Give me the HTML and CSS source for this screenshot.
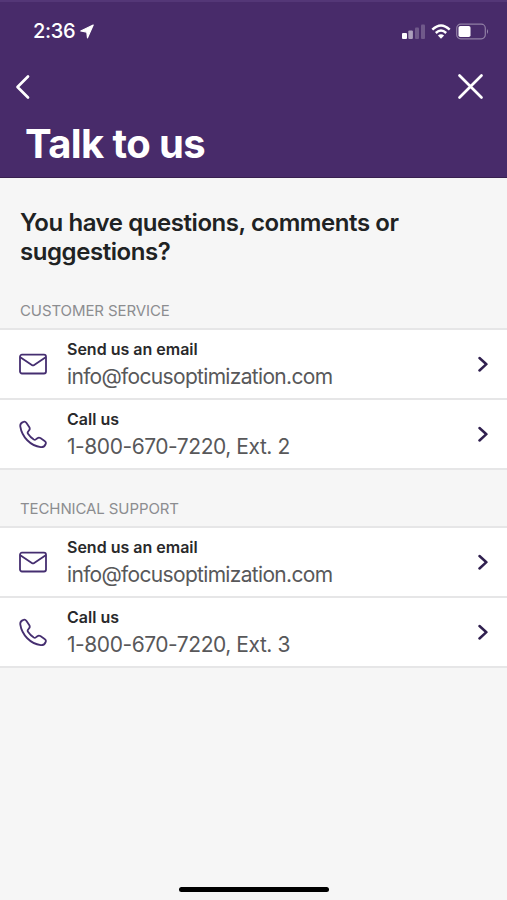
FILE: index.html
```html
<!DOCTYPE html>
<html lang="en">
<head>
<meta charset="utf-8">
<title>Talk to us</title>
<link rel="stylesheet" href="styles.css">
</head>
<body>
<svg class="defs" width="0" height="0" aria-hidden="true">
  <symbol id="mail" viewBox="0 0 28 28"><rect x="1" y="4.7" width="26" height="18.8" rx="2"/><path d="M1.3 7.2 13.2 15.2Q14 15.700 14.8 15.2L26.7 7.2"/></symbol>
  <symbol id="phone" viewBox="0 0 28 28"><path d="M1.300 6.500C1 4.400 2.500 2.400 4.500 1.800C5.700 1.400 6.800 1.900 7.500 2.900L10.200 7C11 8.200 10.900 9.300 10.100 10.300L9 11.700C8.500 12.400 8.500 13.100 9 13.800C10.600 16.200 12.400 18 14.800 19.500C15.500 19.900 16.200 19.900 16.800 19.400L18.400 18.200C19.300 17.500 20.400 17.400 21.400 18.100L25.600 20.900C26.700 21.600 27.100 22.800 26.700 23.900C25.900 26.100 24 27.400 21.700 27.100C11.500 25.900 2.900 16.900 1.300 6.500Z"/></symbol>
  <symbol id="chevron" viewBox="0 0 12 16"><path d="M2.500 2 9.400 8.200 2.500 14.500"/></symbol>
</svg>
<header class="header">
  <div class="status">
    <span class="time">2:36</span>
    <svg class="location" width="14" height="15" viewBox="0 0 14 15"><path d="M13.200 1 .8 7l6 1.100.7 5.700z"/></svg>
    <div class="indicators">
      <svg width="24" height="16" viewBox="0 0 24 16"><rect y="10" width="5" height="6" rx="1"/><rect class="mid" x="6.300" y="7.500" width="4.600" height="8.500" rx="1"/><rect class="dim" x="13" y="4.500" width="4" height="11.500" rx="1"/><rect class="dim" x="19" y="1.500" width="4" height="14.500" rx="1"/></svg>
      <svg class="wifi" width="20" height="15" viewBox="0 0 20 15"><path class="arc" d="M1.300 5.700Q10-2.700 18.700 5.700M4.800 9Q10 4.200 15.200 9"/><path d="M6.900 11.600Q10 9 13.100 11.600L10 14.700Z"/></svg>
      <svg class="battery" width="33" height="17" viewBox="0 0 33 17"><rect class="case" x=".7" y="1.200" width="28.600" height="14.600" rx="4"/><rect x="2.500" y="3" width="12" height="11" rx="1.800"/><path class="tip" d="M31 6q2 2.500 0 5z"/></svg>
    </div>
  </div>
  <nav class="nav">
    <svg width="16" height="26" viewBox="0 0 16 26"><path d="M14 2.500 3.500 13 14 23.500"/></svg>
    <svg width="28" height="28" viewBox="0 0 28 28"><path d="m2.500 2.500 22 22M24.500 2.500 2.500 24.500"/></svg>
  </nav>
  <h1 class="title">Talk to us</h1>
</header>
<main class="main">
  <h2 class="question">You have questions, comments or<br>suggestions?</h2>
  <section class="group">
    <h3 class="group-title">CUSTOMER SERVICE</h3>
    <div class="list">
      <div class="row"><svg class="icon"><use href="#mail"/></svg><div class="text"><div class="label">Send us an email</div><div class="value">info@focusoptimization.com</div></div><svg class="chevron"><use href="#chevron"/></svg></div>
      <div class="row"><svg class="icon"><use href="#phone"/></svg><div class="text"><div class="label">Call us</div><div class="value tel">1-800-670-7220, Ext. 2</div></div><svg class="chevron"><use href="#chevron"/></svg></div>
    </div>
  </section>
  <section class="group">
    <h3 class="group-title">TECHNICAL SUPPORT</h3>
    <div class="list">
      <div class="row"><svg class="icon"><use href="#mail"/></svg><div class="text"><div class="label">Send us an email</div><div class="value">info@focusoptimization.com</div></div><svg class="chevron"><use href="#chevron"/></svg></div>
      <div class="row"><svg class="icon"><use href="#phone"/></svg><div class="text"><div class="label">Call us</div><div class="value tel">1-800-670-7220, Ext. 3</div></div><svg class="chevron"><use href="#chevron"/></svg></div>
    </div>
  </section>
</main>
<div class="home-bar"></div>
</body>
</html>
```
FILE: styles.css
```css
* { box-sizing: border-box; }
body { margin: 0; height: 900px; display: flex; flex-direction: column; overflow: hidden; background: #f6f6f6; font-family: Inter, "Liberation Sans", sans-serif; }
h1, h2, h3 { margin: 0; }
svg { display: block; flex: none; }
.defs { position: absolute; }
.header { height: 178px; flex: none; background: #482b6a; color: #fff; border-top: 2px solid #543777; border-bottom: 1px solid #38204f; }
.status { height: 58px; padding: 0 18px 0 33px; display: flex; align-items: center; fill: #fff; }
.time { font-size: 20px; font-weight: 500; line-height: 24px; letter-spacing: -.3px; }
.location { margin-left: 5px; stroke: #fff; stroke-width: 1.200; stroke-linejoin: round; }
.indicators { margin-left: auto; display: flex; align-items: center; gap: 5px; }
.mid { opacity: .55; }
.dim { opacity: .22; }
.arc { fill: none; stroke: #fff; stroke-width: 2.400; }
.battery .case { fill: none; stroke: #fff; stroke-opacity: .4; stroke-width: 1.200; }
.tip { opacity: .45; }
.nav { height: 54px; padding: 0 22px 0 14px; display: flex; align-items: center; justify-content: space-between; fill: none; stroke: #fff; stroke-width: 2.700; stroke-linecap: round; stroke-linejoin: round; }
.title { padding: 6px 0 0 25px; font-size: 40px; font-weight: 700; line-height: 48px; letter-spacing: -.6px; }
.main { flex: 1; padding-top: 30px; }
.question { padding-left: 20px; color: #202223; font-size: 24px; font-weight: 600; line-height: 29px; letter-spacing: -.43px; white-space: nowrap; }
.group-title { height: 62px; padding: 36px 0 0 20px; color: #8c8d90; font-size: 15px; font-weight: 400; line-height: 18px; letter-spacing: -.1px; }
.group + .group .group-title { height: 56px; padding-top: 30px; }
.list { background: #fff; border-top: 2px solid #e6e6e7; }
.row { height: 70px; padding: 0 18px 0 19px; display: flex; align-items: center; border-bottom: 2px solid #e6e6e7; }
.icon { width: 28px; height: 28px; fill: none; stroke: #452e70; stroke-width: 1.800; stroke-linejoin: round; }
.text { flex: 1; margin-left: 20px; white-space: nowrap; }
.label { color: #29292b; font-size: 16px; font-weight: 600; line-height: 24px; }
.value { padding-top: 2px; color: #58585a; font-size: 21px; line-height: 28px; letter-spacing: -.68px; }
.tel { letter-spacing: -.45px; }
.chevron { width: 12px; height: 16px; fill: none; stroke: #30204f; stroke-width: 2.500; stroke-linecap: round; stroke-linejoin: round; }
.home-bar { width: 150px; height: 5px; margin: 0 auto 8px; border-radius: 3px; background: #000; flex: none; }
```
